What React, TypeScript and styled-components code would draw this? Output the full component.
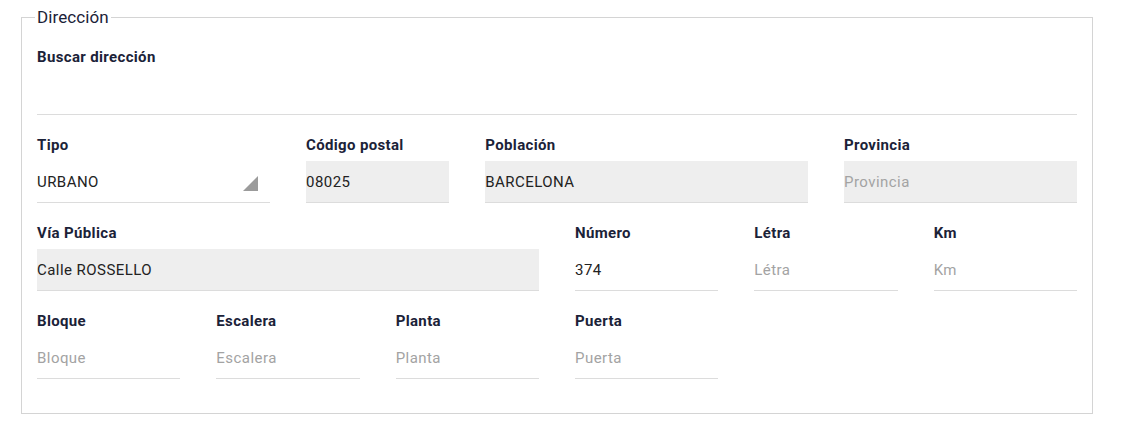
import React from 'react';
import styled, { createGlobalStyle } from 'styled-components';

const GlobalStyle = createGlobalStyle`
  body {
    margin: 0;
    background: #fff;
    font-family: Roboto, "Liberation Sans", Arial, sans-serif;
  }
`;

const Page = styled.div`
  padding: 8px 28px 0 21px;
`;

const Fieldset = styled.fieldset`
  margin: 0;
  border: 1px solid #d4d4d4;
  padding: 0 15px 34px 15px;
  min-width: 0;
`;

const Legend = styled.legend`
  padding: 0 2px;
  margin-left: -2px;
  font-size: 17px;
  line-height: 19px;
  letter-spacing: 0.1px;
  font-weight: 400;
  color: #1b2238;
`;

const Rows = styled.div`
  display: flex;
  flex-direction: column;
  gap: 20px;
  padding-top: 20px;
`;

const Row = styled.div`
  display: grid;
  grid-template-columns: repeat(12, 1fr);
  column-gap: 36px;
`;

const Field = styled.div<{ $span: number }>`
  grid-column: span ${p => p.$span};
  display: flex;
  flex-direction: column;
  min-width: 0;
`;

const Label = styled.label`
  font-size: 15px;
  line-height: 20px;
  letter-spacing: 0.35px;
  font-weight: 700;
  color: #1b2238;
  margin-bottom: 6px;
`;

const Input = styled.div<{ $filled?: boolean; $placeholder?: boolean }>`
  position: relative;
  height: 41px;
  border-bottom: 1px solid #dcdcdc;
  background: ${p => (p.$filled ? '#eeeeee' : 'transparent')};
  display: flex;
  align-items: center;
  font-size: 15px;
  letter-spacing: 0.45px;
  color: ${p => (p.$placeholder ? '#a3a3a3' : '#222')};
  white-space: nowrap;
`;

const Arrow = styled.svg`
  position: absolute;
  right: 12px;
  bottom: 11px;
  width: 15px;
  height: 15px;
`;

type F = { label: string; value?: string; placeholder?: string; span: number; filled?: boolean; select?: boolean };

const rows: F[][] = [
  [{ label: 'Buscar dirección', span: 12 }],
  [
    { label: 'Tipo', value: 'URBANO', span: 3, select: true },
    { label: 'Código postal', value: '08025', span: 2, filled: true },
    { label: 'Población', value: 'BARCELONA', span: 4, filled: true },
    { label: 'Provincia', placeholder: 'Provincia', span: 3, filled: true },
  ],
  [
    { label: 'Vía Pública', value: 'Calle ROSSELLO', span: 6, filled: true },
    { label: 'Número', value: '374', span: 2 },
    { label: 'Létra', placeholder: 'Létra', span: 2 },
    { label: 'Km', placeholder: 'Km', span: 2 },
  ],
  [
    { label: 'Bloque', placeholder: 'Bloque', span: 2 },
    { label: 'Escalera', placeholder: 'Escalera', span: 2 },
    { label: 'Planta', placeholder: 'Planta', span: 2 },
    { label: 'Puerta', placeholder: 'Puerta', span: 2 },
  ],
];

export default function App() {
  return (
    <>
      <GlobalStyle />
      <Page>
        <Fieldset>
          <Legend>Dirección</Legend>
          <Rows>
            {rows.map((row, i) => (
              <Row key={i}>
                {row.map(f => (
                  <Field key={f.label} $span={f.span}>
                    <Label>{f.label}</Label>
                    <Input $filled={f.filled} $placeholder={!f.value && !!f.placeholder}>
                      {f.value || f.placeholder || ''}
                      {f.select && (
                        <Arrow viewBox="0 0 15 15">
                          <polygon points="15,0 15,15 0,15" fill="#9b9b9b" />
                        </Arrow>
                      )}
                    </Input>
                  </Field>
                ))}
              </Row>
            ))}
          </Rows>
        </Fieldset>
      </Page>
    </>
  );
}
